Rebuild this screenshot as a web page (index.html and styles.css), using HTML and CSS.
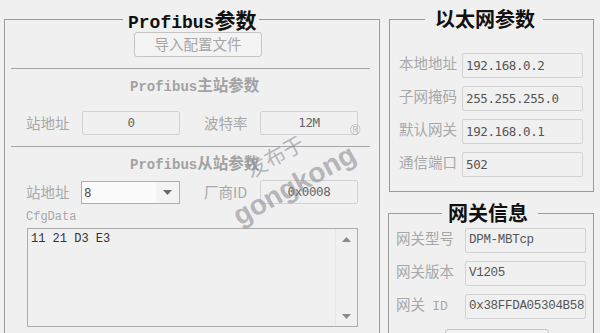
FILE: index.html
```html
<!DOCTYPE html>
<html lang="zh">
<head>
<meta charset="utf-8">
<title>Profibus</title>
<link rel="stylesheet" href="styles.css">
</head>
<body>
<div class="page">
  <fieldset class="group left">
    <legend class="title title-left"><span class="lat">Profibus</span><span class="cjk-b">参数</span></legend>
    <div class="btn-row"><div class="btn">导入配置文件</div></div>
    <div class="sep"></div>
    <div class="sub"><span class="sub-lat">Profibus</span><span class="sub-cjk">主站参数</span></div>
    <div class="row row1">
      <span class="lbl">站地址</span>
      <div class="field center">0</div>
      <span class="lbl lbl2">波特率</span>
      <div class="field center">12M</div>
    </div>
    <div class="sep"></div>
    <div class="sub"><span class="sub-lat">Profibus</span><span class="sub-cjk">从站参数</span></div>
    <div class="row row2">
      <span class="lbl">站地址</span>
      <div class="combo"><span class="combo-val">8</span><span class="combo-btn"><svg width="9" height="5" viewBox="0 0 9 5"><path d="M0 0H9L4.5 5Z" fill="#6a6a6a"/></svg></span></div>
      <span class="lbl lbl2">厂商ID</span>
      <div class="field center">0x0008</div>
    </div>
    <div class="cfg-label">CfgData</div>
    <div class="textarea">
      <div class="ta-text">11 21 D3 E3</div>
      <div class="scroll">
        <svg width="9" height="5" viewBox="0 0 9 5"><path d="M0 5H9L4.5 0Z" fill="#8a8a8a"/></svg>
        <svg width="9" height="5" viewBox="0 0 9 5"><path d="M0 0H9L4.5 5Z" fill="#8a8a8a"/></svg>
      </div>
    </div>
  </fieldset>
  <div class="right">
    <fieldset class="group eth">
      <legend class="title title-eth"><span class="cjk-b">以太网参数</span></legend>
      <div class="form">
        <span class="lbl">本地地址</span><div class="field val">192.168.0.2</div>
        <span class="lbl">子网掩码</span><div class="field val">255.255.255.0</div>
        <span class="lbl">默认网关</span><div class="field val">192.168.0.1</div>
        <span class="lbl">通信端口</span><div class="field val">502</div>
      </div>
    </fieldset>
    <fieldset class="group gw">
      <legend class="title title-gw"><span class="cjk-b">网关信息</span></legend>
      <div class="form form-gw">
        <span class="lbl">网关型号</span><div class="field sval">DPM-MBTcp</div>
        <span class="lbl">网关版本</span><div class="field sval">V1205</div>
        <span class="lbl">网关 <span class="lbl-lat">ID</span></span><div class="field sval">0x38FFDA05304B58</div>
      </div>
      <div class="btn btn-gw"></div>
    </fieldset>
  </div>
  <div class="watermark">
    <span class="wm-cn">发布于</span>
    <span class="wm-en">gongkong</span>
    <span class="wm-r">®</span>
  </div>
</div>
</body>
</html>
```
FILE: styles.css
```css
html, body {
  margin: 0;
  padding: 0;
  background: #f0f0f0;
  overflow: hidden;
}
.page {
  position: relative;
  width: 600px;
  height: 333px;
  overflow: hidden;
  display: flex;
  align-items: flex-start;
  padding: 7px 0 0 4px;
  box-sizing: border-box;
  gap: 8px;
  font-family: "Noto Sans CJK SC", sans-serif;
}
.group {
  margin: 0;
  padding: 0;
  min-width: 0;
  box-sizing: border-box;
  border: 1px solid #9a9a9a;
}
.left {
  width: 376px;
  height: 360px;
  flex: none;
}
.right {
  display: flex;
  flex-direction: column;
  width: 206px;
  flex: none;
}
.title {
  padding: 0;
  line-height: 24px;
  height: 24px;
  color: #111;
  white-space: nowrap;
}
.title .lat {
  font-family: "Liberation Mono", monospace;
  font-weight: bold;
  font-size: 18px;
}
.cjk-b {
  font-family: "Noto Sans CJK SC", sans-serif;
  font-weight: bold;
  font-size: 20px;
}
.title-left {
  margin-left: 118px;
  padding: 0 3px 0 5px;
}
.title-left .cjk-b {
  font-size: 21px;
}
.btn-row {
  margin-top: 1px;
  padding-left: 129px;
}
.btn {
  width: 128px;
  height: 25px;
  box-sizing: border-box;
  border: 1px solid #c4c4c4;
  border-radius: 3px;
  background: #f3f3f3;
  color: #a6a6a6;
  font-size: 14.5px;
  line-height: 22px;
  text-align: center;
}
.sep {
  height: 1px;
  background: #a6a6a6;
  margin: 11px 9px 0 6px;
}
.sub {
  margin-top: 5px;
  height: 20px;
  line-height: 20px;
  padding-left: 125px;
  color: #a2a2a2;
  font-weight: bold;
  white-space: nowrap;
}
.sub-lat {
  font-family: "Liberation Mono", monospace;
  font-size: 14px;
}
.sub-cjk {
  font-size: 15.5px;
}
.row {
  display: grid;
  grid-template-columns: 56px 98px 80px 98px;
  align-items: center;
  padding-left: 21px;
  height: 24px;
}
.row1 { margin-top: 17px; }
.row2 { margin-top: 8px; height: 23px; }
.lbl {
  color: #a8a8a8;
  font-size: 14.5px;
  line-height: 18px;
  white-space: nowrap;
}
.lbl2 { padding-left: 24px; }
.field {
  height: 24px;
  box-sizing: border-box;
  border: 1px solid #d2d2d2;
  border-radius: 2px;
  background: #f0f0f0;
  color: #666;
  font-family: "DejaVu Sans Mono", monospace;
  font-size: 12.5px;
  letter-spacing: -0.4px;
  line-height: 22px;
  overflow: hidden;
  white-space: nowrap;
}
.center { text-align: center; }
.combo {
  height: 23px;
  box-sizing: border-box;
  border: 1px solid #adadad;
  display: flex;
  background: #f4f4f4;
  margin-left: -1px;
}
.combo-val {
  width: 74px;
  background: #fbfbfb;
  color: #555;
  font-family: "DejaVu Sans Mono", monospace;
  font-size: 12.5px;
  line-height: 21px;
  padding-left: 2px;
  box-sizing: border-box;
}
.combo-btn {
  flex: 1;
  display: flex;
  align-items: center;
  justify-content: center;
}
.cfg-label {
  margin-top: 6px;
  padding-left: 21px;
  height: 16px;
  line-height: 16px;
  font-family: "Liberation Mono", monospace;
  font-size: 12px;
  color: #a8a8a8;
}
.textarea {
  margin: 3px 0 0 22px;
  width: 331px;
  height: 99px;
  box-sizing: border-box;
  border: 1px solid #acacac;
  display: flex;
  background: #f0f0f0;
}
.ta-text {
  flex: 1;
  padding: 3px 0 0 3px;
  font-family: "Liberation Mono", monospace;
  font-size: 12px;
  color: #333;
}
.scroll {
  width: 21px;
  border-left: 1px solid #e6e6e6;
  display: flex;
  flex-direction: column;
  justify-content: space-between;
  align-items: center;
  padding: 8px 0 7px;
}
.eth {
  width: 205px;
  margin-left: 1px;
  padding: 0 9px 14px 9px;
}
.title-eth {
  margin-left: 26px;
  padding: 0 8px 0 10px;
}
.form {
  display: grid;
  grid-template-columns: 63px 121px;
  row-gap: 8px;
  margin-top: 22px;
}
.form .field {
  height: 25px;
}
.form .lbl {
  align-self: start;
  margin-top: 1px;
}
.val {
  color: #555;
  padding-left: 3px;
  line-height: 23px;
}
.gw {
  width: 206px;
  margin-top: 9px;
  padding: 0 0 0 7px;
  height: 150px;
}
.title-gw {
  margin-left: 46px;
  padding: 0 10px 0 6px;
}
.form-gw {
  grid-template-columns: 69px 121px;
  margin-top: 3px;
}
.sval {
  font-family: "Liberation Mono", monospace;
  font-size: 12.5px;
  letter-spacing: -0.3px;
  color: #555;
  padding-left: 3px;
  line-height: 23px;
}
.lbl-lat {
  font-family: "Liberation Mono", monospace;
  font-size: 13px;
  margin-left: 4px;
}
.btn-gw {
  margin: 10px 0 0 49px;
  width: 104px;
}
.watermark {
  position: absolute;
  left: 0;
  top: 0;
  width: 600px;
  height: 333px;
  pointer-events: none;
}
.wm-cn, .wm-en, .wm-r {
  position: absolute;
  color: rgba(130, 130, 140, 0.55);
  white-space: nowrap;
  transform-origin: 0 100%;
  transform: rotate(-29deg);
}
.wm-cn {
  left: 254px;
  top: 154px;
  font-size: 21px;
  font-family: "Noto Sans CJK SC", sans-serif;
}
.wm-en {
  left: 243px;
  top: 200px;
  font-size: 28px;
  font-weight: bold;
  font-family: "Liberation Sans", sans-serif;
}
.wm-r {
  left: 350px;
  top: 122px;
  font-size: 14px;
  font-family: "Liberation Sans", sans-serif;
  transform: none;
}
```
